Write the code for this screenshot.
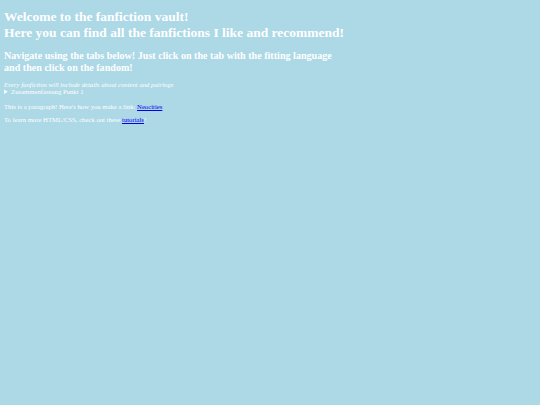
import React from 'react';

// Landing page of the vault: heading, short intro and a collapsed summary block
const App: React.FC = () => {
  return (
    <div className="min-h-screen w-full bg-[#add8e6] px-[4px] pt-[9px] text-white font-['Liberation_Serif',serif]">
      <h1 className="text-[13.5px] leading-[16px] font-bold">
        Welcome to the fanfiction vault!
        <br />
        Here you can find all the fanfictions I like and recommend!
      </h1>

      <h2 className="mt-[9px] text-[10.1px] leading-[11.7px] font-bold">
        Navigate using the tabs below! Just click on the tab with the fitting language
        <br />
        and then click on the fandom!
      </h2>

      <p className="mt-[8px] text-[6.7px] leading-[7px] italic">
        Every fanfiction will include details about content and pairings
      </p>

      <details className="text-[6.7px] leading-[8px]">
        <summary className="cursor-pointer">Zusammenfassung Punkt 1</summary>
        <p>Inhalt folgt.</p>
      </details>

      <p className="mt-[7px] text-[6.7px] leading-[8px]">
        This is a paragraph! Here's how you make a link:{' '}
        <a href="#" className="text-[#0000ee] underline">Neocities</a>
      </p>

      <p className="mt-[5px] text-[6.7px] leading-[8px]">
        To learn more HTML/CSS, check out these{' '}
        <a href="#" className="text-[#0000ee] underline">tutorials</a>!
      </p>
    </div>
  );
};

export default App;
